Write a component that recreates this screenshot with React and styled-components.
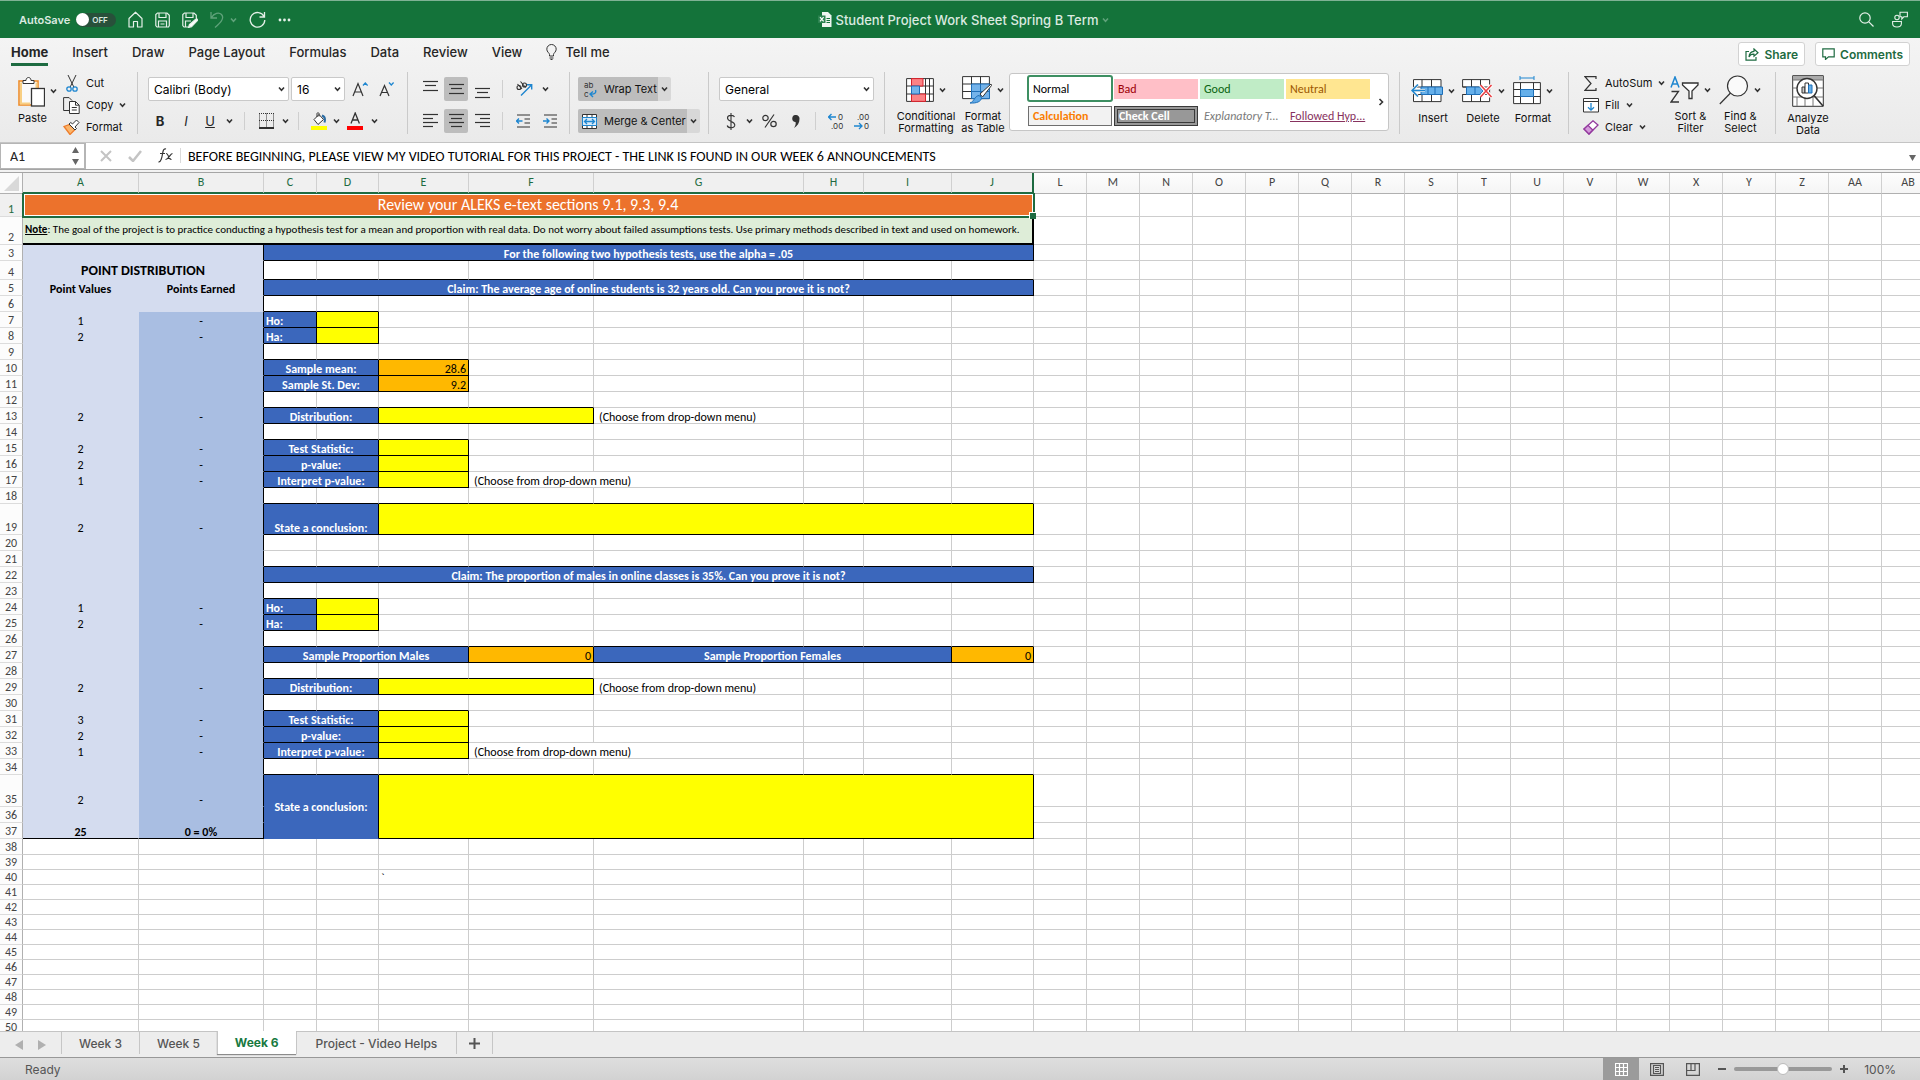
import React from "react";
import styled, { createGlobalStyle, css } from "styled-components";

const UI_FONT = `Inter, Roboto, "Liberation Sans", sans-serif`;
const SHEET_FONT = `Carlito, Lato, "Open Sans", sans-serif`;
const GREEN = "#14733a";
const ACCENT = "#1e6b41";
const INK = "#333";
const BLUE = "#1e86d0";
const GRID = "#cdcdcd";

const GlobalStyle = createGlobalStyle`
  * {
    box-sizing: border-box;
  }
  body {
    margin: 0;
    font-family: ${UI_FONT};
    color: #262626;
  }
  button, input, select {
    font: inherit;
    color: inherit;
  }
  svg {
    display: block;
    flex: none;
  }
`;

const Window = styled.div`
  display: flex;
  flex-direction: column;
  height: 100vh;
  overflow: hidden;
  background: #fff;
`;

/* ---------- title bar ---------- */

const TitleBar = styled.header`
  display: grid;
  grid-template-columns: 1fr auto 1fr;
  align-items: center;
  height: 38px;
  padding: 0 12px 0 19px;
  border-top: 1px solid #7fb294;
  background: ${GREEN};
  color: #dbeae0;
`;

const QuickAccess = styled.div`
  display: flex;
  align-items: center;
  gap: 12px;
`;

const AutoSave = styled.label`
  display: flex;
  align-items: center;
  gap: 6px;
  font-size: 11px;
  font-weight: 600;
`;

const Toggle = styled.span`
  display: flex;
  align-items: center;
  gap: 3px;
  width: 40px;
  height: 14px;
  border-radius: 7px;
  background: #28503a;
  font-size: 8px;

  input {
    appearance: none;
    width: 13px;
    height: 13px;
    margin: 0;
    border-radius: 50%;
    background: #fff;
  }
`;

const BarButton = styled.button`
  display: flex;
  align-items: center;
  gap: 6px;
  padding: 0;
  border: 0;
  background: none;
`;

const DocTitle = styled.h1`
  display: flex;
  align-items: center;
  gap: 4px;
  margin: 0;
  font-size: 13px;
  font-weight: 500;
`;

const TitleActions = styled(QuickAccess)`
  justify-content: flex-end;
  gap: 18px;
`;

/* ---------- ribbon ---------- */

const RibbonArea = styled.section`
  height: 105px;
  border-bottom: 1px solid #c4c4c4;
  background: linear-gradient(#f4f4f4, #eaeaea);
`;

const TabRow = styled.nav`
  display: flex;
  align-items: flex-start;
  justify-content: space-between;
  height: 34px;
  padding: 4px 10px 0 11px;
`;

const Tabs = styled.div`
  display: flex;
  gap: 24px;
`;

const Tab = styled.button`
  display: flex;
  align-items: center;
  gap: 8px;
  height: 24px;
  padding: 0 0 2px;
  border: 0;
  border-bottom: 3px solid ${(props) => (props.$active ? ACCENT : "transparent")};
  background: none;
  font-size: 13px;
  font-weight: ${(props) => (props.$active ? 700 : 500)};
`;

const Actions = styled.div`
  display: flex;
  gap: 10px;
`;

const ActionButton = styled.button`
  display: flex;
  align-items: center;
  gap: 5px;
  height: 24px;
  padding: 0 6px;
  border: 1px solid #d2d2d2;
  border-radius: 3px;
  background: #fff;
  color: ${ACCENT};
  font-size: 12px;
  font-weight: 600;
`;

const Ribbon = styled.div`
  display: flex;
  height: 62px;
`;

const Group = styled.div`
  display: flex;
  flex: none;
  align-items: stretch;
  width: ${(props) => props.$width}px;
  padding-left: ${(props) => props.$pad}px;
  border-right: ${(props) => (props.$last ? 0 : 1)}px solid #cacaca;
`;

const Stack = styled.div`
  display: flex;
  flex-direction: column;
  justify-content: space-between;
  padding: 5px 0 1px;
`;

const Line = styled.div`
  display: flex;
  align-items: center;
  height: 24px;
`;

const Tool = styled.button`
  display: flex;
  flex: none;
  align-items: center;
  justify-content: center;
  gap: 3px;
  width: ${(props) => props.$width}px;
  height: 24px;
  padding: 0;
  border: 0;
  border-radius: 2px;
  background: ${(props) => (props.$on ? "#bdbdbd" : "none")};
  font-size: 13px;
`;

const ToolDivider = styled.span`
  width: 1px;
  height: 18px;
  margin: 0 ${(props) => props.$gap}px;
  background: #cfcfcf;
`;

const BigTool = styled.button`
  display: flex;
  flex-direction: column;
  flex: none;
  align-items: center;
  width: ${(props) => props.$width}px;
  height: 62px;
  padding: 3px 0 0;
  border: 0;
  background: none;
  color: #111;
  font-size: 11px;
  line-height: 12px;
  white-space: pre-line;
`;

const PasteTool = styled(BigTool)`
  align-items: flex-start;
  padding-left: 3px;
`;

const BigArt = styled.span`
  display: flex;
  align-items: center;
  gap: 5px;
  height: 32px;
  margin-bottom: 5px;
`;

const SmallTools = styled.div`
  display: flex;
  flex-direction: column;
`;

const SmallTool = styled.button`
  display: grid;
  flex: none;
  grid-template-columns: 17px auto auto;
  align-items: center;
  justify-content: start;
  column-gap: 6px;
  height: 22px;
  padding: 0;
  border: 0;
  background: none;
  color: #111;
  font-size: 11px;

  svg:first-child {
    justify-self: center;
  }
`;

const SelectBox = styled.span`
  display: grid;
  align-items: center;
  width: ${(props) => props.$width}px;
  height: 24px;
  margin-right: ${(props) => props.$after || 0}px;
  border: 1px solid #c9c9c9;
  border-radius: 2px;
  background: #fff;
  font-size: 12px;
  color: #000;

  select,
  svg {
    grid-area: 1 / 1;
  }
  select {
    appearance: none;
    width: 100%;
    padding: 0 5px;
    border: 0;
    background: none;
  }
  svg {
    justify-self: end;
    margin-right: 3px;
    pointer-events: none;
  }
`;

const SplitTool = styled.div`
  display: flex;
  align-self: flex-start;
  height: 24px;
  border-radius: 2px;
  background: #d8d8d8;
  overflow: hidden;
`;

const SplitMain = styled.button`
  display: flex;
  align-items: center;
  gap: 7px;
  padding: 0 1px 0 4px;
  border: 0;
  background: #bdbdbd;
  color: #111;
  font-size: 11px;
  white-space: nowrap;
`;

const SplitArrow = styled.button`
  padding: 0 3px;
  border: 0;
  background: none;
`;

const Gallery = styled.div`
  display: grid;
  grid-template-columns: 1fr 20px;
  align-items: center;
  justify-items: center;
  width: 380px;
  height: 58px;
  margin-top: 1px;
  padding-left: 17px;
  border: 1px solid #c6c6c6;
  border-radius: 3px;
  background: #fff;
`;

const StyleGrid = styled.div`
  display: grid;
  align-self: start;
  grid-template-columns: repeat(4, 86px);
  grid-template-rows: 27px 22px;
  row-gap: 3px;
  padding-top: 1px;
`;

const CellStyle = styled.button`
  margin: ${(props) => (props.$selected ? "0" : props.$low ? "1px" : "4px 1px 3px")};
  padding: 0 4px;
  border: ${(props) => props.$border || "0"};
  border-radius: ${(props) => (props.$selected ? 3 : 0)}px;
  outline: ${(props) => props.$outline || "none"};
  outline-offset: -4px;
  background: ${(props) => props.$fill || "#fff"};
  color: ${(props) => props.$ink};
  font-family: ${SHEET_FONT};
  font-size: 12px;
  line-height: 14px;
  font-weight: ${(props) => (props.$bold ? 700 : 400)};
  font-style: ${(props) => (props.$italic ? "italic" : "normal")};
  text-decoration: ${(props) => (props.$underline ? "underline" : "none")};
  text-align: left;
  white-space: nowrap;
`;

/* ---------- formula bar ---------- */

const FormulaBar = styled.div`
  display: flex;
  align-items: center;
  height: 30px;
  padding-right: 4px;
  border-bottom: 1px solid #a5a5a5;
  background: linear-gradient(#fff 26px, #a5a5a5 26px, #a5a5a5 27px, #f2f2f2 27px);
`;

const NameBox = styled.label`
  display: flex;
  align-items: center;
  align-self: flex-start;
  width: 86px;
  height: 26px;
  padding: 0 5px 0 9px;
  border: 1px solid #b5b5b5;
  border-right-width: 2px;

  input {
    flex: 1;
    width: 0;
    padding: 0;
    border: 0;
    background: none;
    font-family: ${SHEET_FONT};
    font-size: 14px;
  }
`;

const FormulaTools = styled.div`
  display: flex;
  align-items: center;
  gap: 16px;
  height: 15px;
  margin-bottom: 4px;
  padding: 0 7px 0 14px;
  border-right: 1px solid #dadada;
`;

const FormulaInput = styled.input`
  flex: 1;
  margin-bottom: 2px;
  padding: 0 7px;
  border: 0;
  background: none;
  color: #000;
  font-family: ${SHEET_FONT};
  font-size: 14px;
`;

/* ---------- sheet ---------- */

const Sheet = styled.main`
  flex: 1;
  min-height: 0;
  overflow: hidden;
  font-family: ${SHEET_FONT};
`;

const Table = styled.table`
  table-layout: fixed;
  border-collapse: separate;
  border-spacing: 0;
  font-size: 12px;
  line-height: 14px;
`;

const Col = styled.col`
  width: ${(props) => props.$width}px;
`;

const Row = styled.tr`
  height: ${(props) => props.$height}px;
`;

const ColHead = styled.th`
  padding: 0 0 2px;
  border-right: 1px solid ${(props) => (props.$edge ? ACCENT : "#d0d0d0")};
  border-bottom: ${(props) => (props.$picked ? `2px solid ${ACCENT}` : "1px solid #b0b0b0")};
  background: ${(props) => (props.$picked ? "#f0f0f0" : "linear-gradient(#fdfdfd, #f5f5f5)")};
  color: ${(props) => (props.$picked ? ACCENT : "#444")};
  font-weight: 400;
  ${(props) => props.$edge && css`border-right-width: 2px;`}
`;

const Corner = styled.th`
  padding: 0 2px 0 4px;
  border-right: 1px solid #b0b0b0;
  border-bottom: 1px solid #b0b0b0;
  background: #fafafa;
`;

const RowHead = styled.th`
  padding: 0;
  border-right: 1px solid #b0b0b0;
  border-bottom: 1px solid #dcdcdc;
  background: ${(props) => (props.$picked ? "#f0f0f0" : "#fcfcfc")};
  color: ${(props) => (props.$picked ? ACCENT : "#444")};
  font-weight: 400;
  vertical-align: bottom;
`;

const kinds = {
  title: css`
    background: #ec722c;
    color: #fff;
    font-size: 16px;
    line-height: 22px;
  `,
  note: css`
    background: #deedd8;
    font-size: 11px;
    vertical-align: middle;
  `,
  heading: css`
    background: #d4dcef;
    font-size: 14px;
    line-height: 16px;
  `,
  light: css`
    background: #d4dcef;
  `,
  medium: css`
    background: #a9bee2;
  `,
  label: css`
    background: #3b67bc;
    color: #fff;
    font-weight: 700;
  `,
  entry: css`
    background: #ffff00;
  `,
  value: css`
    background: #ffb800;
  `,
};

const Cell = styled.td`
  position: relative;
  padding: 0 ${(props) => props.$pad || 2}px;
  border-right: ${(props) => props.$right};
  border-bottom: ${(props) => props.$bottom};
  color: #000;
  line-height: 12px;
  text-align: ${(props) => props.$align || "center"};
  vertical-align: ${(props) => props.$valign || "bottom"};
  white-space: nowrap;
  font-weight: ${(props) => (props.$bold ? 700 : 400)};
  ${(props) => kinds[props.$kind]}
`;

const Selection = styled.span`
  position: absolute;
  inset: -1px -2px -2px -1px;
  border: 2px solid ${ACCENT};
  border-top-width: 1px;
  box-shadow: inset 0 0 0 1px #fff;
  z-index: 1;

  &::after {
    content: "";
    position: absolute;
    right: -3px;
    bottom: -3px;
    width: 6px;
    height: 6px;
    border: 1px solid #fff;
    border-width: 1px 0 0 1px;
    background: ${ACCENT};
  }
`;

/* ---------- bottom bars ---------- */

const SheetTabs = styled.nav`
  display: flex;
  flex: none;
  height: 27px;
  border-top: 1px solid #c4c4c4;
  border-bottom: 1px solid #989898;
  background: #ededed;
  color: #555;
`;

const SheetArrows = styled.div`
  display: flex;
  align-items: center;
  gap: 15px;
  width: 61px;
  padding: 0 0 0 15px;
`;

const SheetTab = styled.button`
  height: 22px;
  padding: 0 ${(props) => props.$pad || 17}px;
  border: 0;
  border-left: 1px solid #c6c6c6;
  background: none;
  font-size: 12px;
  font-weight: 500;
  ${(props) =>
    props.$active &&
    css`
      height: 23px;
      margin-top: -1px;
      background: #fff;
      color: #18793f;
      font-weight: 700;
      box-shadow: 0 1px 1px #8c8c8c;
    `}
`;

const AddTab = styled(SheetTab)`
  border-right: 1px solid #c6c6c6;
`;

const StatusBar = styled.footer`
  display: flex;
  flex: none;
  align-items: center;
  justify-content: space-between;
  height: 22px;
  padding: 0 24px 0 25px;
  background: linear-gradient(#dedede, #d2d2d2);
  color: #555;
  font-size: 12px;
`;

const ViewControls = styled.div`
  display: flex;
  align-items: center;
  height: 100%;
`;

const Views = styled.div`
  display: flex;
  height: 100%;
  margin-right: 7px;
`;

const ViewButton = styled.button`
  display: flex;
  align-items: center;
  justify-content: center;
  width: 36px;
  height: 100%;
  padding: 0;
  border: 0;
  background: ${(props) => (props.$on ? "#9b9b9b" : "none")};
`;

const ZoomButton = styled.button`
  display: flex;
  width: 8px;
  padding: 0;
  border: 0;
  background: none;
`;

const Slider = styled.input`
  appearance: none;
  width: 98px;
  height: 4px;
  margin: 0 8px;
  border-radius: 2px;
  background: #999;

  &::-webkit-slider-thumb {
    appearance: none;
    width: 12px;
    height: 12px;
    border: 1px solid #bbb;
    border-radius: 50%;
    background: #fff;
  }
`;

const Percent = styled.span`
  margin-left: 16px;
`;

/* ---------- icons ---------- */

const Icon = ({ w, h = w, color = INK, sw = 1, children }) => (
  <svg width={w} height={h} viewBox={`0 0 ${w} ${h}`} fill="none" stroke={color} strokeWidth={sw} aria-hidden="true">
    {children}
  </svg>
);

const Chevron = ({ color = INK }) => (
  <Icon w={7} h={6} color={color} sw={1.6}>
    <path d="M1 1.5l2.5 2.7L6 1.5" />
  </Icon>
);

const HomeIcon = () => (
  <Icon w={15} h={17} color="#e4f0e8" sw={1.2}>
    <path d="M1 7.500L7.500 1.200 14 7.500V16H9.500V10.500H5.500V16H1z" strokeLinejoin="round" />
  </Icon>
);

const SaveIcon = () => (
  <Icon w={15} h={16} color="#e4f0e8" sw={1.2}>
    <path d="M2.500 1H12l2.300 2.300V13.500L13.500 15H2L.8 13.500V2.500z" />
    <path d="M4 1v4.500h7V1M3.500 15V9h8v6M5.500 12h4" />
  </Icon>
);

const SaveEditIcon = () => (
  <Icon w={16} h={16} color="#e4f0e8" sw={1.2}>
    <path d="M14.300 6V3.300L12 1H2.500L.8 2.500v11L2 15h4M4 1v4.500h7V1M3.500 15V9H9" />
    <path d="M14.500 6.500l1.300 1.600-6.300 6.500-3 .9.900-3z" fill="#fff" />
  </Icon>
);

const UndoIcon = () => (
  <Icon w={14} h={17} color="#5fa27a" sw={1.3}>
    <path d="M1 1v6h6M1.500 6.500C4 2 9 .8 11.500 3.500c3.500 4-1.500 8.500-6.500 13" />
  </Icon>
);

const RedoIcon = () => (
  <Icon w={17} h={17} color="#e4f0e8" sw={1.3}>
    <path d="M15 5.500A7.300 7.300 0 1 0 15.800 9M15.500 1v5h-5" />
  </Icon>
);

const DotsIcon = () => (
  <Icon w={13} h={4}>
    {[2, 6.5, 11].map((x) => (
      <circle key={x} cx={x} cy="2" r="1.4" fill="#e4f0e8" stroke="none" />
    ))}
  </Icon>
);

const ExcelDocIcon = () => (
  <Icon w={14} h={15} color="none">
    <path d="M4 0h6l3.500 3.500V15H4z" fill="#eef5f0" />
    <path d="M8.500 6.500H12M8.500 8.500H12M8.500 10.500H12" stroke={GREEN} />
    <path d="M0 3.500h7.500v7.500H0z" fill="#2c8350" />
    <path d="M2 5.200l3.600 4.200M5.600 5.200L2 9.400" stroke="#fff" strokeWidth="1.200" />
  </Icon>
);

const SearchIcon = () => (
  <Icon w={15} color="#e4f0e8" sw={1.2}>
    <circle cx="6" cy="6" r="5.200" />
    <path d="M9.800 9.800l4.700 4.700" />
  </Icon>
);

const PresenceIcon = () => (
  <Icon w={16} h={17} color="#e4f0e8" sw={1.1}>
    <circle cx="5" cy="6.500" r="2.200" />
    <path d="M.6 10.500h8.800v2c0 2-1.600 3.500-4.400 3.500S.6 14.500.6 12.500zM8 1.200h7.400v4.600h-3.600L9.800 8V5.800H8z" />
  </Icon>
);

const BulbIcon = () => (
  <Icon w={11} h={16}>
    <path d="M3.500 12V10.500C3.500 9 .8 8 .8 5.200a4.700 4.700 0 0 1 9.400 0C10.200 8 7.500 9 7.500 10.500V12zM3.500 14h4M4.500 15.500h2" />
  </Icon>
);

const ShareIcon = () => (
  <Icon w={14} h={13} color={ACCENT} sw={1.2}>
    <path d="M4 3.500H1v8.700h10V9M9 1l4 3.700-4 3.500V6.200C6.500 6 5 7 4 9c.2-3.500 2-5.500 5-5.700z" />
  </Icon>
);

const CommentIcon = () => (
  <Icon w={13} h={12} color={ACCENT} sw={1.2}>
    <path d="M.8.8h11.400v8H6.500L3.500 11.500V8.800H.8z" />
  </Icon>
);

const PasteIcon = () => (
  <Icon w={27} h={31}>
    <rect x="1" y="5" width="19" height="24" fill="#fafafa" stroke="#ee8e2c" strokeWidth="1.600" />
    <path d="M3 6.500v21h9M18.500 6.500v6" stroke="#f8cf83" strokeWidth="2" />
    <path d="M5 7.500V4.500h3c0-4 5-4 5 0h3v3z" fill="#fff" />
    <rect x="13.500" y="12.500" width="13" height="17.500" fill="#fff" strokeWidth="1.300" />
  </Icon>
);

const CutIcon = () => (
  <Icon w={12} h={17}>
    <path d="M2 0l5.800 12M10 0L4.200 12" />
    <circle cx="3" cy="14" r="2.200" stroke={BLUE} strokeWidth="1.300" />
    <circle cx="9" cy="14" r="2.200" stroke={BLUE} strokeWidth="1.300" />
  </Icon>
);

const CopyIcon = () => (
  <Icon w={17} h={17}>
    <path d="M6 13.500H.6V.6h5.500l3 3" />
    <path d="M6.500 4.500h6l3.700 3.700v8.300H6.500z" fill="#fff" />
    <path d="M12.500 4.500v3.700h3.700M8.800 10.500h5M8.800 13h5" />
  </Icon>
);

const BrushIcon = () => (
  <Icon w={17} h={16}>
    <path d="M1 7.500l6 8 5-5-5.500-5z" fill="#fbb56b" stroke="#ee7d2b" strokeWidth="1.300" />
    <path d="M6 5l6 6 1.500-1.500-1.500-1.500 4-4.500L13.500 1 9.500 5 7.800 3.500z" fill="#fff" />
  </Icon>
);

const GrowFont = ({ down }) => (
  <Icon w={16} h={16}>
    <path d={down ? "M1 15L5.500 4.500 10 15M2.700 11.500h5.600" : "M1 15L6 2.500 11 15M2.700 11h6.600"} strokeWidth="1.200" />
    <path d={down ? "M10 1.500l2.300 2.500 2.300-2.500" : "M11 4.500L13.300 2l2.300 2.500"} stroke={BLUE} strokeWidth="1.300" />
  </Icon>
);

const BorderIcon = () => (
  <Icon w={15} h={16}>
    <path d="M.5.500v14M7.500.500v14M14.500.500v14M0 .5h15M0 7.500h15" strokeDasharray="1 1" />
    <path d="M0 15h15" strokeWidth="1.600" stroke="#000" />
  </Icon>
);

const FillIcon = () => (
  <Icon w={16} h={18}>
    <path d="M3 7.500l5-5 4.500 5L7 12.500zM6 5V1.500c0-1 2-1 2 0v3" fill="#fff" />
    <path d="M11 3.500c3 1 3.500 3.500 2.500 7" stroke="#2c6ca3" strokeWidth="2" />
    <path d="M0 14h16v4H0z" fill="#ff0" stroke="none" />
  </Icon>
);

const FontColorIcon = () => (
  <Icon w={16} h={18}>
    <path d="M4 11.500L8.200 1l4.200 10.500M5.500 8h5.500" strokeWidth="1.300" />
    <path d="M0 14h16v4H0z" fill="red" stroke="none" />
  </Icon>
);

// rows of text bars, given as [x1, x2] pairs
const Bars = ({ lines, top = 5 }) => (
  <Icon w={15} h={24} sw={1.2}>
    {lines.map(([x1, x2], i) => {
      const step = lines.length === 3 ? 4.5 : 4;
      const y = top + Math.floor(i * step) + 0.5;
      return <path key={y} d={`M${x1} ${y}H${x2}`} />;
    })}
  </Icon>
);

const OrientIcon = () => (
  <Icon w={17} h={16} sw={1.1}>
    <circle cx="3" cy="6.500" r="2" />
    <path d="M1.500 3l4.500 5" />
    <circle cx="8.500" cy="4" r="2" />
    <path d="M4.500.500l5 6" />
    <path d="M5 14.500L15.500 4M11 3.800h4.700V8.500" stroke={BLUE} strokeWidth="1.400" />
  </Icon>
);

const IndentIcon = ({ inward }) => (
  <Icon w={15} h={14} sw={1.2}>
    <path d="M1 1h13M8.500 5h5.500M8.500 9h5.500M1 13h13" />
    <path d={inward ? "M0 7h6M3.500 4.500L6 7 3.500 9.500" : "M6.500 7h-6M3 4.500L.5 7 3 9.500"} stroke={BLUE} strokeWidth="1.400" />
  </Icon>
);

const SvgText = styled.text`
  fill: ${INK};
  stroke: none;
  font-family: ${UI_FONT};
  font-size: 8px;
`;

const WrapIcon = () => (
  <Icon w={15} h={22}>
    <SvgText x="2" y="10">ab</SvgText>
    <SvgText x="2" y="19">c</SvgText>
    <path d="M13.500 12c1 3-1 4.500-5 4M11 13.500L8 16l3 3" stroke={BLUE} strokeWidth="1.400" />
  </Icon>
);

const MergeIcon = () => (
  <Icon w={15} h={15}>
    <path d="M.5.500h14v14H.5zM5 .5v3M10 .5v3M5 11.500v3M10 11.500v3" fill="#fff" />
    <path d="M.5 3.500h14v8H.5z" fill="#d6eafa" stroke={BLUE} />
    <path d="M2.500 7.500h10M5 5L2.500 7.500 5 10M10 5l2.500 2.500L10 10" stroke={BLUE} strokeWidth="1.300" />
  </Icon>
);

const DecimalIcon = ({ less }) => (
  <Icon w={16} h={22}>
    <SvgText x={less ? 3 : 10} y="10">{less ? ".00" : "0"}</SvgText>
    <SvgText x={less ? 10 : 3} y="19">{less ? "0" : ".00"}</SvgText>
    <path d={less ? "M0 16h8M5 13l3 3-3 3" : "M8 7H.5M3.500 4l-3 3 3 3"} stroke={BLUE} strokeWidth="1.300" />
  </Icon>
);

const CondIcon = () => (
  <Icon w={28} h={24}>
    <path d="M.6.600h26.800v22.800H.6zM5.500.500v23M19.500.500v23M23.500.500v23M.5 8h27M.5 16h27" fill="#fff" />
    <path d="M5.500.600h11.500V8H5.500zM5.500 16h14v7.400h-14z" fill="#fb8285" stroke="#d8202a" />
    <path d="M5.500 8h8v8h-8z" fill="#74b3ea" stroke="#1d6fb8" />
  </Icon>
);

const TableIcon = () => (
  <Icon w={30} h={28}>
    <path d="M.6.600h26.800v22H.6zM9.500.500v22M18.500.500v22M.5 8h27M.5 15.500h27" fill="#fff" />
    <path d="M9.500 8h18v14.600h-18zM18.500 8v14.600M9.500 15.500h18" fill="#74b3ea" stroke="#1d6fb8" />
    <path d="M29 8L18 18l2.500 3L29.500 9.500z" fill="#fff" />
    <path d="M19.500 21.500c0 4-5 6-11.500 5.500 4-1 4.500-7 9-7.500z" fill="#5fa8e6" stroke="#1d6fb8" />
  </Icon>
);

const InsertIcon = () => (
  <Icon w={32} h={24}>
    <path d="M2.500.600h27.500v22H2.500zM11 .6v22M20.500.600v22M2.500 8h27.500M2.500 15.500h27.500" fill="#fff" />
    <path d="M10 8h21.500v7.500H10zM17 8v7.500M24 8v7.500" fill="#66b0ea" stroke="#1d6fb8" />
    <path d="M14 11.500H1M7 5.500l-6 6 6 6" stroke="#eee" strokeWidth="3" />
    <path d="M14 11.500H1M7 5.500l-6 6 6 6" stroke={BLUE} strokeWidth="1.500" />
  </Icon>
);

const DeleteIcon = () => (
  <Icon w={31} h={24}>
    <path d="M.6.600h27v22H.6V15.500h4V8h-4zM9.500.600v22M18.500.600v22M.6 8h27M.6 15.500h27" fill="#fff" />
    <path d="M4.500 8H18l3 4-3 3.500H4.500zM13 8v7.500" fill="#66b0ea" stroke="#1d6fb8" />
    <path d="M18.500 6l11 12M29.500 6l-11 12" stroke="#fff" strokeWidth="3.500" />
    <path d="M18.500 6l11 12M29.500 6l-11 12" stroke="#ea4145" strokeWidth="1.600" />
  </Icon>
);

const FormatIcon = () => (
  <Icon w={28} h={30}>
    <path d="M7 2h14M7 0v4M21 0v4" stroke={BLUE} />
    <path d="M.6 6.600h26.800v21H.6zM7.500 6.600v21M20.500 6.600v21M.6 13.500h26.800M.6 20.500h26.800" fill="#fff" />
    <path d="M7.500 13.500h13v7h-13z" fill="#66b0ea" stroke="#1d6fb8" />
  </Icon>
);

const SumIcon = () => (
  <Icon w={13} h={15} sw={1.2}>
    <path d="M12 3V.7H1l6 6.800-6 6.800h11V12" />
  </Icon>
);

const DownIcon = () => (
  <Icon w={16} h={15}>
    <path d="M.5.500h15v13.500H.5zM.5 3.500h15" fill="#fff" />
    <path d="M8 5v7M5 9.200l3 3 3-3" stroke={BLUE} strokeWidth="1.300" />
  </Icon>
);

const EraserIcon = () => (
  <Icon w={16} h={15} color="#92389d" sw={1.3}>
    <path d="M1 9L10 .8 15 5 6 14z" fill="#fff" />
    <path d="M1 9l4-3.700L9.800 10 6 14z" fill="#d49ada" />
  </Icon>
);

const SortIcon = () => (
  <Icon w={29} h={28} sw={1.3}>
    <path d="M1 11.500L5 1l4 10.500M2.300 8h5.400" stroke={BLUE} strokeWidth="1.500" />
    <path d="M1.500 15.500h7L1 26h8" />
    <path d="M12.500 7h15.500v2l-6 6v7.500h-3V15l-6.500-6z" fill="#fff" />
  </Icon>
);

const FindIcon = () => (
  <Icon w={30} h={30} sw={1.2}>
    <circle cx="18.500" cy="11" r="10" fill="#fafafa" />
    <path d="M11.500 18L.8 29" />
  </Icon>
);

const AnalyzeIcon = () => (
  <Icon w={32} h={32}>
    <path d="M.7.700h30.600v30.600H.7z" fill="#fff" />
    <path d="M1 1h30v4H1z" fill="#aaa" stroke="none" />
    <path d="M.7 5h30.600M.7 13h6M.7 22h30.600M25 13h6M5 22v9M13 22v9M21 22v9" stroke="#777" />
    <circle cx="15" cy="13.500" r="10" fill="#fff" strokeWidth="1.400" />
    <path d="M22 20.500L31 31" strokeWidth="1.600" />
    <path d="M10 12h3v6h-3z" fill="#ccc" />
    <path d="M13 8h3.500v10H13z" fill="#fff" />
    <path d="M16.500 10H20v8h-3.500z" fill="#66b0ea" stroke="#1d6fb8" />
  </Icon>
);

const Triangle = ({ d, w, h, fill = "#666" }) => (
  <svg width={w} height={h} aria-hidden="true">
    <path d={d} fill={fill} />
  </svg>
);

/* ---------- sheet data ---------- */

const columns = [
  ["A", 116], ["B", 125], ["C", 53], ["D", 62], ["E", 90], ["F", 125], ["G", 210], ["H", 60], ["I", 88], ["J", 82],
  ...["L", "M", "N", "O", "P", "Q", "R", "S", "T", "U", "V", "W", "X", "Y", "Z", "AA", "AB"].map((name) => [name, 53]),
];
const tableWidth = columns.reduce((sum, [, width]) => sum + width, 23);
const LAST_PICKED = 9;

const specialHeights = { 1: 23, 2: 28, 4: 19, 19: 31, 35: 32 };
const rowHeight = (row) => specialHeights[row] || (row > 38 ? 15 : 16);

const label = (text, cols = 2, extra) => ({ kind: "label", box: true, text, cols, ...extra });
const entry = (cols = 1, extra) => ({ kind: "entry", box: true, cols, ...extra });
const value = (text) => ({ kind: "value", box: true, text, align: "right" });
const hint = (cols) => ({ text: "(Choose from drop-down menu)", align: "left", pad: 5, cols });

const cells = {
  A1: { kind: "title", cols: 10, text: "Review your ALEKS e-text sections 9.1, 9.3, 9.4", selected: true },
  A2: {
    kind: "note",
    cols: 10,
    align: "left",
    thick: true,
    text: (
      <>
        <b>
          <u>Note</u>
        </b>
        : The goal of the project is to practice conducting a hypothesis test for a mean and proportion with real data. Do
        not worry about failed assumptions tests. Use primary methods described in text and used on homework.
      </>
    ),
  },
  C3: label("For the following two hypothesis tests, use the alpha = .05", 8),
  A4: { kind: "heading", cols: 2, text: "POINT DISTRIBUTION", bold: true, endBlack: true },
  A5: { kind: "light", text: "Point Values", bold: true },
  B5: { kind: "light", text: "Points Earned", bold: true, endBlack: true },
  C5: label("Claim: The average age of online students is 32 years old. Can you prove it is not?", 8),
  C7: label("Ho:", 1, { align: "left" }),
  D7: entry(),
  C8: label("Ha:", 1, { align: "left" }),
  D8: entry(),
  C10: label("Sample mean:"),
  E10: value("28.6"),
  C11: label("Sample St. Dev:"),
  E11: value("9.2"),
  C13: label("Distribution:"),
  E13: entry(2),
  G13: hint(1),
  C15: label("Test Statistic:"),
  E15: entry(),
  C16: label("p-value:"),
  E16: entry(),
  C17: label("Interpret p-value:"),
  E17: entry(),
  F17: hint(2),
  C19: label("State a conclusion:"),
  E19: entry(6),
  C22: label("Claim: The proportion of males in online classes is 35%. Can you prove it is not?", 8),
  C24: label("Ho:", 1, { align: "left" }),
  D24: entry(),
  C25: label("Ha:", 1, { align: "left" }),
  D25: entry(),
  C27: label("Sample Proportion Males", 3),
  F27: value("0"),
  G27: label("Sample Proportion Females", 3),
  J27: value("0"),
  C29: label("Distribution:"),
  E29: entry(2),
  G29: hint(1),
  C31: label("Test Statistic:"),
  E31: entry(),
  C32: label("p-value:"),
  E32: entry(),
  C33: label("Interpret p-value:"),
  E33: entry(),
  F33: hint(2),
  C35: label("State a conclusion:", 2, { rows: 3, valign: "middle", openBottom: true }),
  E35: entry(6, { rows: 3 }),
  A37: { kind: "light", text: "25", bold: true },
  B37: { kind: "medium", text: "0 = 0%", bold: true, endBlack: true },
  E40: { text: "`", align: "left" },
};

const points = { 7: 1, 8: 2, 13: 2, 15: 2, 16: 2, 17: 1, 19: 2, 24: 1, 25: 2, 29: 2, 31: 3, 32: 2, 33: 1, 35: 2 };
for (let row = 3; row <= 37; row += 1) {
  if (row === 4) continue;
  cells[`A${row}`] = cells[`A${row}`] || { kind: "light", text: points[row] };
  cells[`B${row}`] = cells[`B${row}`] || {
    kind: row < 7 ? "light" : "medium",
    text: points[row] && "-",
    endBlack: true,
  };
}

// every covered position points back at the cell that covers it
const cover = {};
Object.entries(cells).forEach(([key, cell]) => {
  const [, name, row] = key.match(/([A-Z]+)(\d+)/);
  const start = columns.findIndex(([col]) => col === name);
  for (let r = 0; r < (cell.rows || 1); r += 1) {
    for (let c = 0; c < (cell.cols || 1); c += 1) {
      cover[`${start + c}:${Number(row) + r}`] = { key, cell };
    }
  }
});

const fills = { heading: "#d4dcef", light: "#d4dcef", medium: "#a9bee2", label: "#3b67bc" };
const isBox = (col, row) => Boolean(cover[`${col}:${row}`]?.cell.box);

const bordersOf = (cell, col, row) => {
  const { cols = 1, rows = 1, kind } = cell;
  if (cell.selected) return ["1px solid #ec722c", "1px solid #ec722c"];
  if (cell.thick) return ["2px solid #000", "2px solid #000"];
  const black = "1px solid #000";
  const plain = `1px solid ${fills[kind] || GRID}`;
  const right = cell.box || cell.endBlack || isBox(col + cols, row) ? black : plain;
  // a merged span can sit above several cells, so look at each of them
  const boxBelow = Array.from({ length: cols }, (_, i) => isBox(col + i, row + rows)).some(Boolean);
  let bottom = cell.box || boxBelow ? black : plain;
  if (row === 37 && col < 2) bottom = black;
  if (cell.openBottom) bottom = plain;
  return [right, bottom];
};

const SheetRow = ({ row }) => (
  <Row $height={rowHeight(row)}>
    <RowHead scope="row" $picked={row === 1}>
      {row}
    </RowHead>
    {columns.map(([name], col) => {
      const key = `${name}${row}`;
      const covered = cover[`${col}:${row}`];
      if (covered && covered.key !== key) return null;
      const cell = covered ? covered.cell : {};
      const [right, bottom] = bordersOf(cell, col, row);
      return (
        <Cell
          key={key}
          colSpan={cell.cols}
          rowSpan={cell.rows}
          $kind={cell.kind}
          $align={cell.align}
          $valign={cell.valign}
          $bold={cell.bold}
          $pad={cell.pad}
          $right={right}
          $bottom={bottom}
        >
          {cell.text}
          {cell.selected && <Selection />}
        </Cell>
      );
    })}
  </Row>
);

const rowNumbers = Array.from({ length: 50 }, (_, i) => i + 1);

const Worksheet = () => (
  <Sheet>
    <Table style={{ width: tableWidth }}>
      <colgroup>
        <Col $width={23} />
        {columns.map(([name, width]) => (
          <Col key={name} $width={width} />
        ))}
      </colgroup>
      <thead>
        <Row $height={21}>
          <Corner>
            <Triangle w={15} h={15} d="M15 0V15H0z" fill="#d9d9d9" />
          </Corner>
          {columns.map(([name], i) => (
            <ColHead key={name} scope="col" $picked={i <= LAST_PICKED} $edge={i === LAST_PICKED}>
              {name}
            </ColHead>
          ))}
        </Row>
      </thead>
      <tbody>
        {rowNumbers.map((row) => (
          <SheetRow key={row} row={row} />
        ))}
      </tbody>
    </Table>
  </Sheet>
);

/* ---------- ribbon content ---------- */

const Big = ({ icon, text, width, arrow = true }) => (
  <BigTool $width={width}>
    <BigArt>
      {icon}
      {arrow && <Chevron />}
    </BigArt>
    {text}
  </BigTool>
);

const Dropdown = ({ name, text, width, after }) => (
  <SelectBox $width={width} $after={after}>
    <select aria-label={name}>
      <option>{text}</option>
    </select>
    <Chevron />
  </SelectBox>
);

const Split = ({ icon, text }) => (
  <SplitTool>
    <SplitMain>
      {icon}
      {text}
    </SplitMain>
    <SplitArrow aria-label={`${text} options`}>
      <Chevron />
    </SplitArrow>
  </SplitTool>
);

const ClipboardGroup = () => (
  <Group $width={138} $pad={15}>
    <PasteTool $width={48}>
      <BigArt>
        <PasteIcon />
        <Chevron />
      </BigArt>
      Paste
    </PasteTool>
    <SmallTools>
      <SmallTool>
        <CutIcon />
        Cut
      </SmallTool>
      <SmallTool>
        <CopyIcon />
        Copy
        <Chevron />
      </SmallTool>
      <SmallTool>
        <BrushIcon />
        Format
      </SmallTool>
    </SmallTools>
  </Group>
);

const FontGroup = () => (
  <Group $width={270} $pad={10}>
    <Stack>
      <Line>
        <Dropdown name="Font" text="Calibri (Body)" width={141} after={2} />
        <Dropdown name="Font size" text="16" width={54} after={3} />
        <Tool $width={24} aria-label="Increase font size">
          <GrowFont />
        </Tool>
        <Tool $width={30} aria-label="Decrease font size">
          <GrowFont down />
        </Tool>
      </Line>
      <Line>
        <Tool $width={24}>
          <b>B</b>
        </Tool>
        <Tool $width={28}>
          <i>I</i>
        </Tool>
        <Tool $width={20}>
          <u>U</u>
        </Tool>
        <Tool $width={18} aria-label="Underline options">
          <Chevron />
        </Tool>
        <ToolDivider $gap={6} />
        <Tool $width={30} aria-label="Borders">
          <BorderIcon />
        </Tool>
        <Tool $width={8} aria-label="Border options">
          <Chevron />
        </Tool>
        <ToolDivider $gap={9} />
        <Tool $width={22} aria-label="Fill color">
          <FillIcon />
        </Tool>
        <Tool $width={12} aria-label="Fill color options">
          <Chevron />
        </Tool>
        <Tool $width={26} aria-label="Font color">
          <FontColorIcon />
        </Tool>
        <Tool $width={12} aria-label="Font color options">
          <Chevron />
        </Tool>
      </Line>
    </Stack>
  </Group>
);

const AlignGroup = () => (
  <Group $width={162} $pad={8}>
    <Stack>
      <Line>
        <Tool $width={28} aria-label="Top align">
          <Bars lines={[[0, 15], [2, 13], [0, 15]]} top={4} />
        </Tool>
        <Tool $width={24} $on aria-label="Middle align">
          <Bars lines={[[0, 15], [2, 13], [0, 15]]} top={7} />
        </Tool>
        <Tool $width={28} aria-label="Bottom align">
          <Bars lines={[[0, 15], [2, 13], [0, 15]]} top={11} />
        </Tool>
        <ToolDivider $gap={6} />
        <Tool $width={30} aria-label="Orientation">
          <OrientIcon />
        </Tool>
        <Tool $width={12} aria-label="Orientation options">
          <Chevron />
        </Tool>
      </Line>
      <Line>
        <Tool $width={28} aria-label="Align left">
          <Bars lines={[[0, 15], [0, 10], [0, 15], [0, 10]]} />
        </Tool>
        <Tool $width={24} $on aria-label="Center">
          <Bars lines={[[0, 15], [2, 13], [0, 15], [2, 13]]} />
        </Tool>
        <Tool $width={28} aria-label="Align right">
          <Bars lines={[[0, 15], [5, 15], [0, 15], [5, 15]]} />
        </Tool>
        <ToolDivider $gap={6} />
        <Tool $width={28} aria-label="Decrease indent">
          <IndentIcon />
        </Tool>
        <Tool $width={26} aria-label="Increase indent">
          <IndentIcon inward />
        </Tool>
      </Line>
    </Stack>
  </Group>
);

const NumberGroup = () => (
  <Group $width={176} $pad={10}>
    <Stack>
      <Line>
        <Dropdown name="Number format" text="General" width={155} />
      </Line>
      <Line>
        <Tool $width={24} aria-label="Currency">
          <Icon w={10} h={17} sw={1.1}>
            <path d="M5 0v17M8.500 4C7.500 1.800 1.500 1.500 1.500 5c0 4 7.300 2.800 7.300 7 0 3.500-6.800 3.500-7.600.5" />
          </Icon>
        </Tool>
        <Tool $width={12} aria-label="Currency options">
          <Chevron />
        </Tool>
        <Tool $width={28} aria-label="Percent">
          <Icon w={15} h={14} sw={1.2}>
            <circle cx="3.500" cy="4" r="2.700" />
            <circle cx="11.500" cy="10" r="2.700" />
            <path d="M12 .5L3 13.500" />
          </Icon>
        </Tool>
        <Tool $width={25} aria-label="Comma">
          <Icon w={8} h={13}>
            <path d="M4 0a3.500 3.500 0 0 1 3.500 3.800C7.500 8 5.500 11 2 13c1.500-2.500 2-4 1.500-6A3.500 3.500 0 0 1 4 0z" fill={INK} stroke="none" />
          </Icon>
        </Tool>
        <ToolDivider $gap={7} />
        <Tool $width={26} aria-label="Increase decimal">
          <DecimalIcon />
        </Tool>
        <Tool $width={26} aria-label="Decrease decimal">
          <DecimalIcon less />
        </Tool>
      </Line>
    </Stack>
  </Group>
);

const StylesGroup = () => (
  <Group $width={515} $pad={10}>
    <Big icon={<CondIcon />} text={"Conditional\nFormatting"} width={62} />
    <Big icon={<TableIcon />} text={"Format\nas Table"} width={52} />
    <Gallery>
      <StyleGrid>
        <CellStyle $selected $border="2px solid #3d8f62" $ink="#000">Normal</CellStyle>
        <CellStyle $fill="#ffbfc7" $ink="#9c0006">Bad</CellStyle>
        <CellStyle $fill="#c0ecc6" $ink="#0a6410">Good</CellStyle>
        <CellStyle $fill="#ffe691" $ink="#9c5700">Neutral</CellStyle>
        <CellStyle $low $bold $fill="#f2f2f2" $border="1px solid #6f6f6f" $ink="#fa7d00">Calculation</CellStyle>
        <CellStyle $low $bold $fill="#989898" $border="1px solid #3a3a3a" $outline="1px solid #3a3a3a" $ink="#fff">
          Check Cell
        </CellStyle>
        <CellStyle $low $italic $ink="#7a7a7a">Explanatory T...</CellStyle>
        <CellStyle $low $underline $ink="#87325e">Followed Hyp...</CellStyle>
      </StyleGrid>
      <BarButton aria-label="More styles">
        <Icon w={6} h={8} sw={1.6}>
          <path d="M1.500 1l3 3-3 3" />
        </Icon>
      </BarButton>
    </Gallery>
  </Group>
);

const EditingGroup = () => (
  <Group $width={207} $pad={13}>
    <SmallTools>
      <SmallTool>
        <SumIcon />
        AutoSum
        <Chevron />
      </SmallTool>
      <SmallTool>
        <DownIcon />
        Fill
        <Chevron />
      </SmallTool>
      <SmallTool>
        <EraserIcon />
        Clear
        <Chevron />
      </SmallTool>
    </SmallTools>
    <Big icon={<SortIcon />} text={"Sort &\nFilter"} width={50} />
    <Big icon={<FindIcon />} text={"Find &\nSelect"} width={50} />
  </Group>
);

const tabNames = ["Home", "Insert", "Draw", "Page Layout", "Formulas", "Data", "Review", "View"];

const App = () => (
  <>
    <GlobalStyle />
    <Window>
      <TitleBar>
        <QuickAccess>
          <AutoSave>
            AutoSave
            <Toggle>
              <input type="checkbox" role="switch" />
              OFF
            </Toggle>
          </AutoSave>
          <BarButton aria-label="Home">
            <HomeIcon />
          </BarButton>
          <BarButton aria-label="Save">
            <SaveIcon />
          </BarButton>
          <BarButton aria-label="Save as">
            <SaveEditIcon />
          </BarButton>
          <BarButton aria-label="Undo">
            <UndoIcon />
            <Chevron color="#5fa27a" />
          </BarButton>
          <BarButton aria-label="Redo">
            <RedoIcon />
          </BarButton>
          <BarButton aria-label="More">
            <DotsIcon />
          </BarButton>
        </QuickAccess>
        <DocTitle>
          <ExcelDocIcon />
          Student Project Work Sheet Spring B Term
          <Chevron color="#5fa27a" />
        </DocTitle>
        <TitleActions>
          <BarButton aria-label="Search">
            <SearchIcon />
          </BarButton>
          <BarButton aria-label="Presence">
            <PresenceIcon />
          </BarButton>
        </TitleActions>
      </TitleBar>

      <RibbonArea>
        <TabRow>
          <Tabs>
            {tabNames.map((name) => (
              <Tab key={name} $active={name === "Home"}>
                {name}
              </Tab>
            ))}
            <Tab>
              <BulbIcon />
              Tell me
            </Tab>
          </Tabs>
          <Actions>
            <ActionButton>
              <ShareIcon />
              Share
            </ActionButton>
            <ActionButton>
              <CommentIcon />
              Comments
            </ActionButton>
          </Actions>
        </TabRow>
        <Ribbon>
          <ClipboardGroup />
          <FontGroup />
          <AlignGroup />
          <Group $width={139} $pad={8}>
            <Stack>
              <Split icon={<WrapIcon />} text="Wrap Text" />
              <Split icon={<MergeIcon />} text="Merge & Center" />
            </Stack>
          </Group>
          <NumberGroup />
          <StylesGroup />
          <Group $width={169} $pad={8}>
            <Big icon={<InsertIcon />} text="Insert" width={50} />
            <Big icon={<DeleteIcon />} text="Delete" width={50} />
            <Big icon={<FormatIcon />} text="Format" width={50} />
          </Group>
          <EditingGroup />
          <Group $width={64} $pad={2} $last>
            <Big icon={<AnalyzeIcon />} text={"Analyze\nData"} width={60} arrow={false} />
          </Group>
        </Ribbon>
      </RibbonArea>

      <FormulaBar>
        <NameBox>
          <input aria-label="Name box" defaultValue="A1" />
          <Triangle w={7} h={18} d="M3.500 0L7 6H0zM3.500 18L7 12H0z" />
        </NameBox>
        <FormulaTools>
          <BarButton aria-label="Cancel">
            <Icon w={12} h={12} color="#c4c4c4" sw={2}>
              <path d="M1 1l10 10M11 1L1 11" />
            </Icon>
          </BarButton>
          <BarButton aria-label="Enter">
            <Icon w={14} h={12} color="#c4c4c4" sw={2.5}>
              <path d="M1 7l4 4 8-10" />
            </Icon>
          </BarButton>
          <BarButton aria-label="Insert function">
            <Icon w={15} h={15} sw={1.2}>
              <path d="M8 1C5.500 0 5 3 4.500 6S3 14.500.5 13.800M2 5.500h5M8 5.500c2.500-.5 2.500 6.500 5.500 6M14.500 5.500c-2.500 0-4 6.500-7 6" />
            </Icon>
          </BarButton>
        </FormulaTools>
        <FormulaInput
          aria-label="Formula"
          defaultValue="BEFORE BEGINNING, PLEASE VIEW MY VIDEO TUTORIAL FOR THIS PROJECT - THE LINK IS FOUND IN OUR WEEK 6 ANNOUNCEMENTS"
        />
        <BarButton aria-label="Expand formula bar">
          <Triangle w={7} h={6} d="M0 0H7L3.500 6z" />
        </BarButton>
      </FormulaBar>

      <Worksheet />

      <SheetTabs>
        <SheetArrows>
          <Triangle w={8} h={10} d="M8 0V10L0 5z" fill="#b0b0b0" />
          <Triangle w={8} h={10} d="M0 0V10L8 5z" fill="#b0b0b0" />
        </SheetArrows>
        <SheetTab>Week 3</SheetTab>
        <SheetTab>Week 5</SheetTab>
        <SheetTab $active>Week 6</SheetTab>
        <SheetTab $pad={19}>Project - Video Helps</SheetTab>
        <AddTab aria-label="Add sheet" $pad={12}>
          <Icon w={11} sw={2} color="#555">
            <path d="M5.500 0v11M0 5.500h11" />
          </Icon>
        </AddTab>
      </SheetTabs>

      <StatusBar>
        Ready
        <ViewControls>
          <Views>
            <ViewButton $on aria-label="Normal view">
              <Icon w={13} color="#fff" sw={1.2}>
                <path d="M.5.500h12v12H.5zM4.500.500v12M8.500.500v12M.5 4.500h12M.5 8.500h12" />
              </Icon>
            </ViewButton>
            <ViewButton aria-label="Page layout view">
              <Icon w={14} h={13} color="#555" sw={1.2}>
                <path d="M.6.600h12.800v11.800H.6zM3.500 2.500h7v8h-7zM5 4.500h4M5 6.500h4M5 8.500h4" />
              </Icon>
            </ViewButton>
            <ViewButton aria-label="Page break view">
              <Icon w={14} h={13} color="#555" sw={1.2}>
                <path d="M.6.600h12.800v11.800H.6zM.6 7.500H9V.5M5 .5v7" />
              </Icon>
            </ViewButton>
          </Views>
          <ZoomButton aria-label="Zoom out">
            <Icon w={8} sw={2} color="#555">
              <path d="M0 4h8" />
            </Icon>
          </ZoomButton>
          <Slider type="range" min="0" max="200" defaultValue="100" aria-label="Zoom" />
          <ZoomButton aria-label="Zoom in">
            <Icon w={8} sw={2} color="#555">
              <path d="M4 0v8M0 4h8" />
            </Icon>
          </ZoomButton>
          <Percent>100%</Percent>
        </ViewControls>
      </StatusBar>
    </Window>
  </>
);

export default App;
